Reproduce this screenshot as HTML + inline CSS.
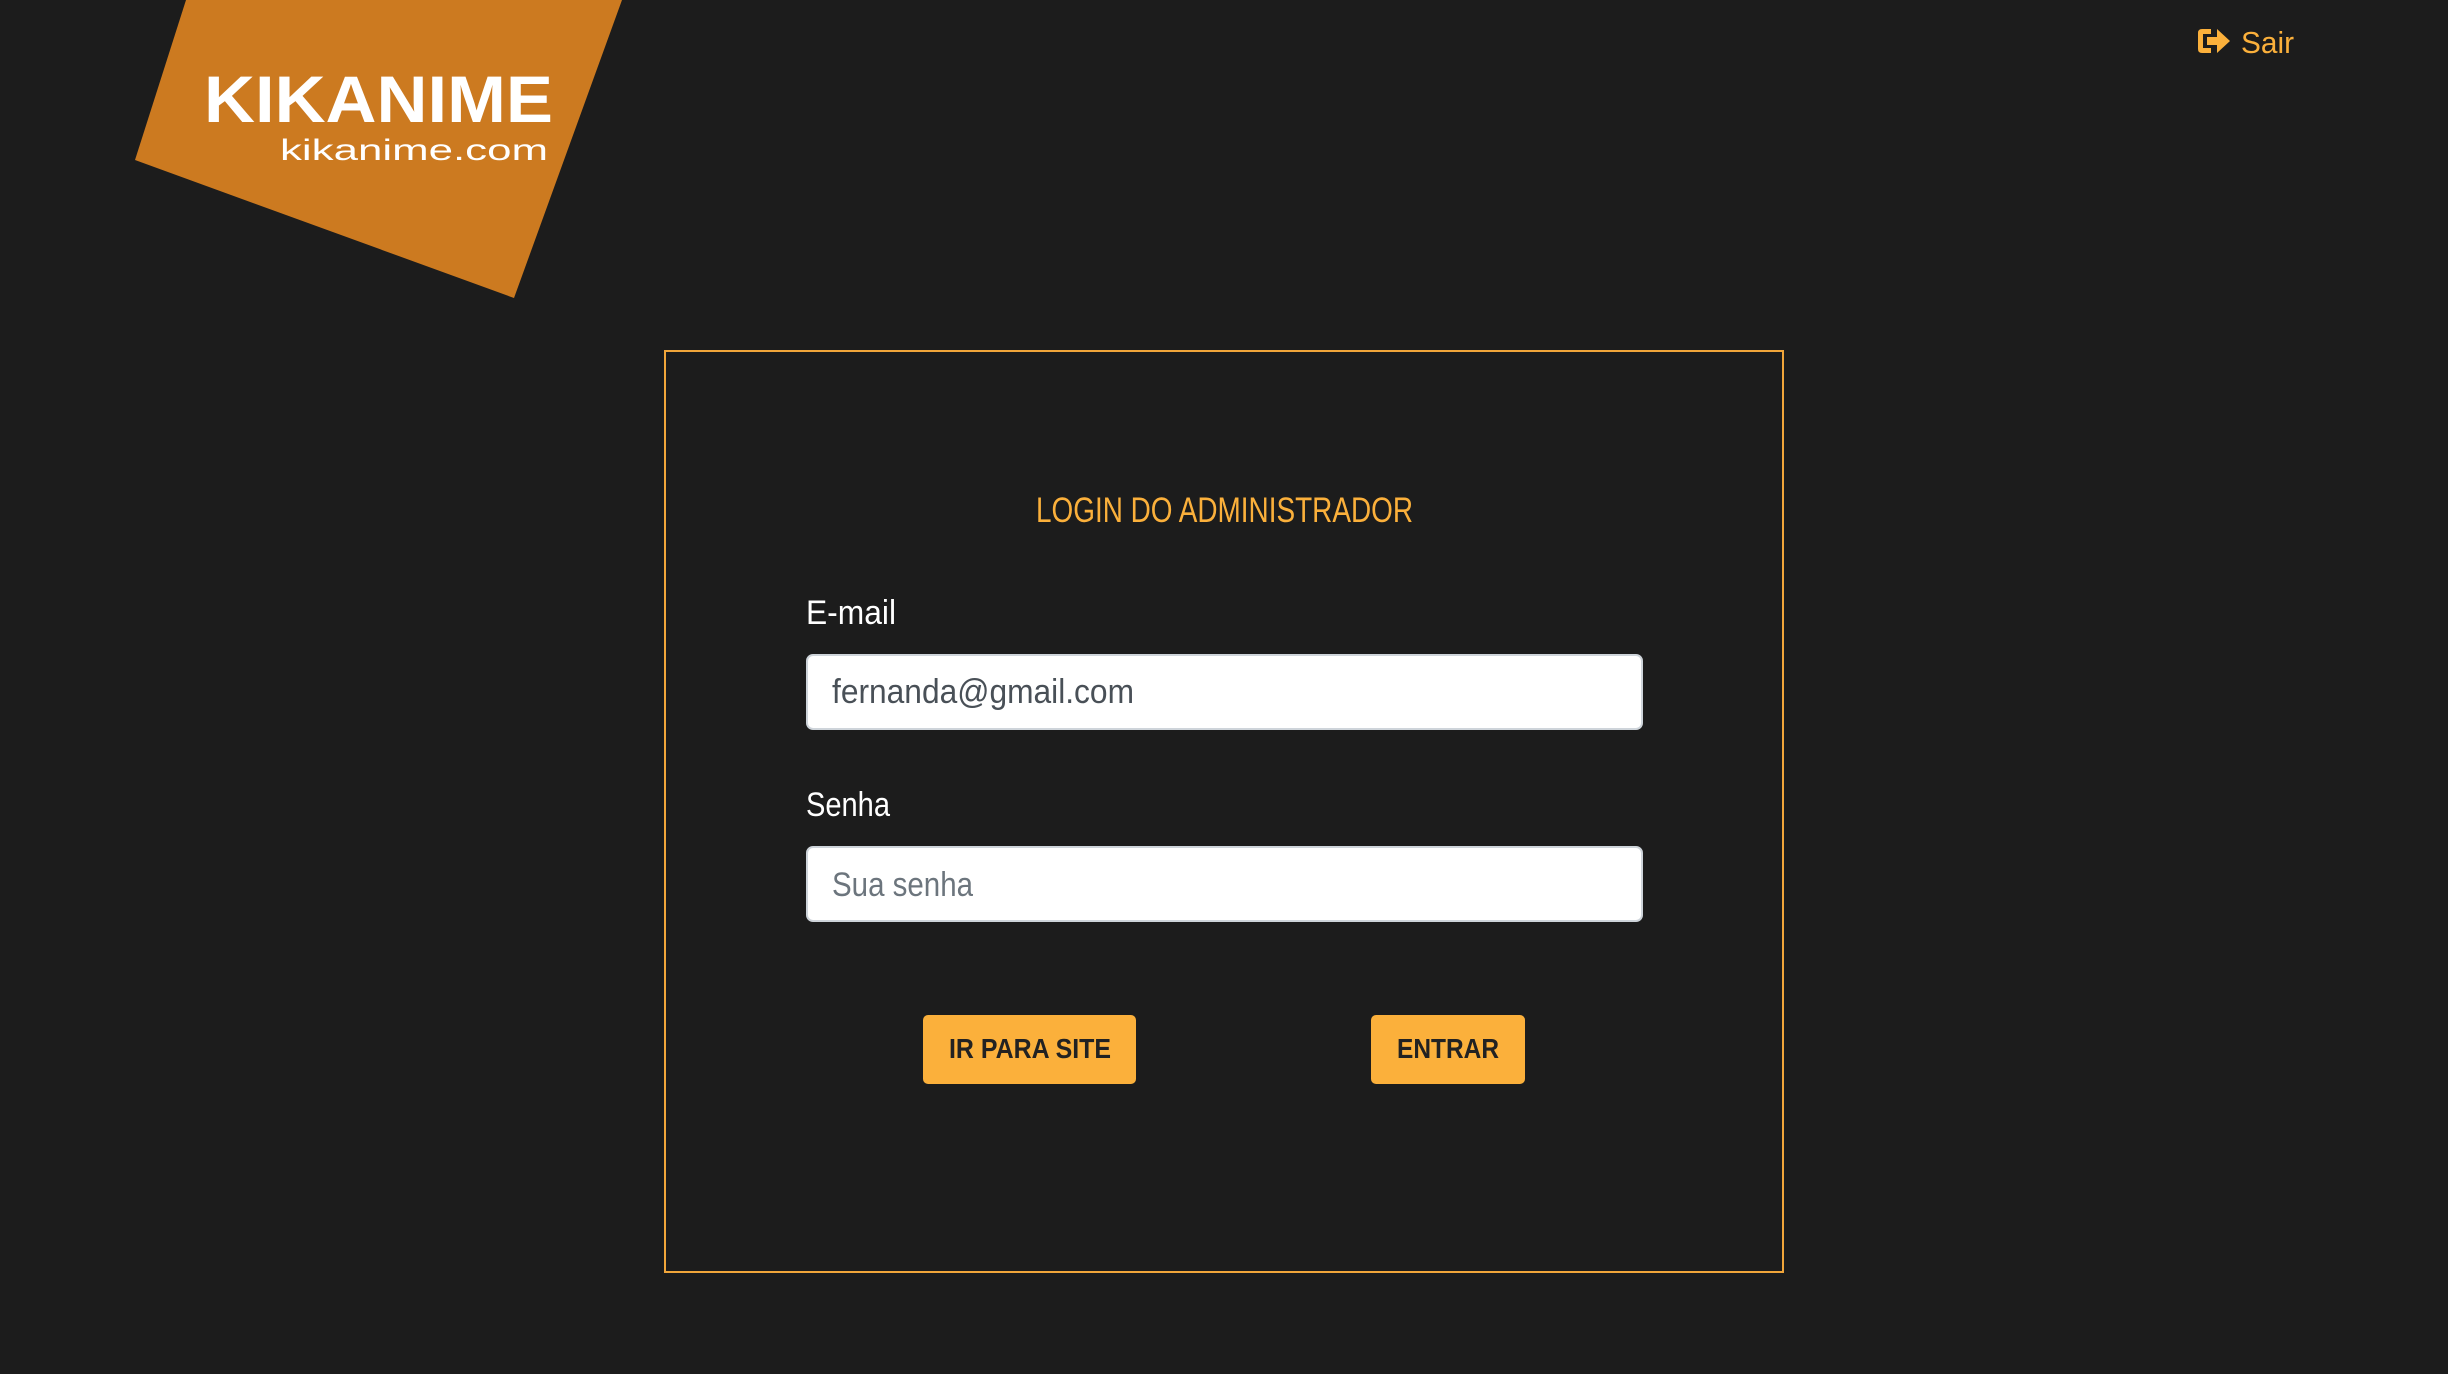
<!DOCTYPE html>
<html><head><meta charset="utf-8"><style>
html,body{margin:0;padding:0;background:#1c1c1c;width:2448px;height:1374px;overflow:hidden}
svg{display:block}
text{font-family:"Liberation Sans",sans-serif}
</style></head><body>
<svg width="2448" height="1374" viewBox="0 0 2448 1374" xmlns="http://www.w3.org/2000/svg">
<rect width="2448" height="1374" fill="#1c1c1c"/>
<polygon points="186,0 622,0 514,298 135,160" fill="#cc7a20"/>
<text x="204" y="122" font-size="66" font-weight="bold" fill="#fff" textLength="349" lengthAdjust="spacingAndGlyphs">KIKANIME</text>
<text x="280" y="160" font-size="30" fill="#fff" textLength="268" lengthAdjust="spacingAndGlyphs">kikanime.com</text>
<g fill="#fbb03b">
<path d="M2198 33 q0-4 4-4 h9 v5 h-8 v14 h8 v5 h-9 q-4 0-4-4z"/>
<path d="M2207 37 h10 v-8 l13 12 l-13 12 v-8 h-10z"/>
</g>
<text x="2241" y="53" font-size="31" fill="#fbb03b" textLength="53" lengthAdjust="spacingAndGlyphs">Sair</text>
<rect x="665" y="351" width="1118" height="921" fill="none" stroke="#f0a53a" stroke-width="2"/>
<text x="1036" y="522" font-size="35" fill="#fbb03b" textLength="377" lengthAdjust="spacingAndGlyphs">LOGIN DO ADMINISTRADOR</text>
<text x="806" y="624" font-size="34" fill="#fff" textLength="90" lengthAdjust="spacingAndGlyphs">E-mail</text>
<rect x="807" y="655" width="835" height="74" rx="6" fill="#fff" stroke="#ced4da" stroke-width="2"/>
<text x="832" y="703" font-size="34" fill="#495057" textLength="302" lengthAdjust="spacingAndGlyphs">fernanda@gmail.com</text>
<text x="806" y="816" font-size="34" fill="#fff" textLength="84" lengthAdjust="spacingAndGlyphs">Senha</text>
<rect x="807" y="847" width="835" height="74" rx="6" fill="#fff" stroke="#ced4da" stroke-width="2"/>
<text x="832" y="896" font-size="34" fill="#6c757d" textLength="141" lengthAdjust="spacingAndGlyphs">Sua senha</text>
<rect x="923" y="1015" width="213" height="69" rx="5" fill="#fbb03b"/>
<text x="949" y="1058" font-size="28" font-weight="bold" fill="#222" textLength="162" lengthAdjust="spacingAndGlyphs">IR PARA SITE</text>
<rect x="1371" y="1015" width="154" height="69" rx="5" fill="#fbb03b"/>
<text x="1397" y="1058" font-size="28" font-weight="bold" fill="#222" textLength="102" lengthAdjust="spacingAndGlyphs">ENTRAR</text>
</svg>
</body></html>
